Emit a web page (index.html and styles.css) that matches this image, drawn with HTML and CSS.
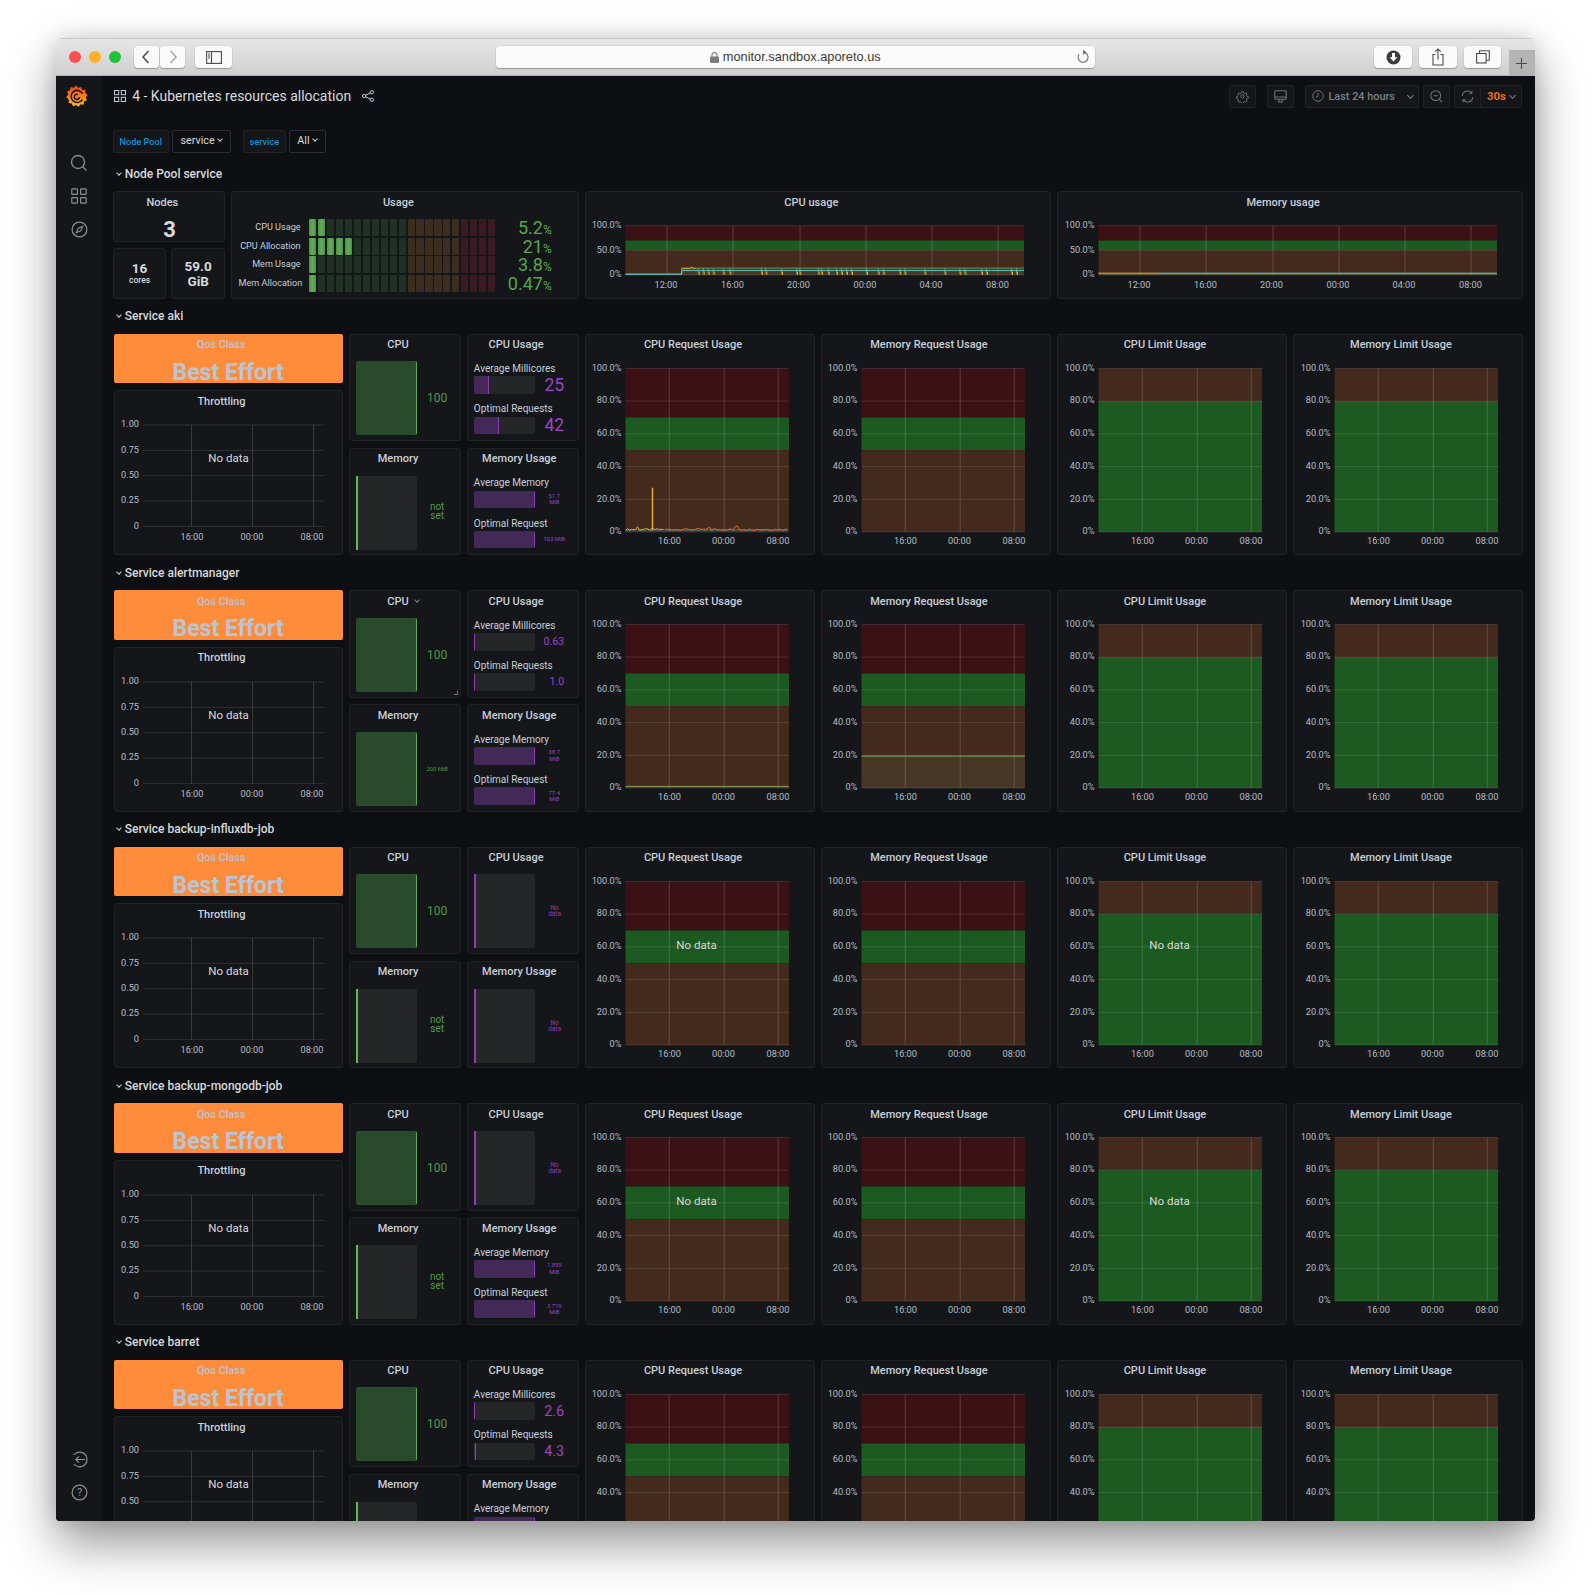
FILE: index.html
```html
<!DOCTYPE html>
<html lang="en">
<head>
    <meta charset="UTF-8">
    <meta name="viewport" content="width=device-width, initial-scale=1.0">
    <title>4 - Kubernetes resources allocation</title>
    <link rel="stylesheet" href="styles.css">
</head>
<body>
    <div class="window">
        <header class="safari">
            <span class="light light-red"></span>
            <span class="light light-yellow"></span>
            <span class="light light-green"></span>
            <div class="nav-pair">
                <button class="tool tool-half"><svg width="12" height="16" viewBox="0 0 12 16"><path d="M8.5 2 3 8l5.5 6" fill="none" stroke="#4a4a4a" stroke-width="1.5"/></svg></button>
                <button class="tool tool-half"><svg width="12" height="16" viewBox="0 0 12 16"><path d="M3.5 2 9 8l-5.5 6" fill="none" stroke="#a8a8a8" stroke-width="1.5"/></svg></button>
            </div>
            <button class="tool tool-sidebar"><svg width="16" height="13" viewBox="0 0 16 13"><rect x=".6" y=".6" width="14.8" height="11.8" fill="none" stroke="#4a4a4a" stroke-width="1.1"/><path d="M5.5 .6v11.8" stroke="#4a4a4a" stroke-width="1.1"/><path d="M2 3h2M2 5h2M2 7h2" stroke="#4a4a4a"/></svg></button>
            <div class="url">
                <svg class="lock" width="9" height="11" viewBox="0 0 9 11"><rect y="4.5" width="9" height="6.5" rx="1" fill="#7b7b7b"/><path d="M2 5V3a2.5 2.5 0 0 1 5 0v2" fill="none" stroke="#7b7b7b" stroke-width="1.1"/></svg>
                <span class="url-text">monitor.sandbox.aporeto.us</span>
                <svg class="reload" width="14" height="15" viewBox="0 0 14 15"><path d="M8.2 3.4A5 5 0 1 1 3 5.4" fill="none" stroke="#6a6a6a" stroke-width="1.1"/><path d="M7.2 0.6 10.4 3.4 7.2 5.8z" fill="#6a6a6a"/></svg>
            </div>
            <button class="tool tool-right tool-first"><svg width="15" height="15" viewBox="0 0 15 15"><circle cx="7.5" cy="7.5" r="7" fill="#3c3c3c"/><path d="M6 3h3v4.2h2.4L7.5 11.6 3.6 7.2H6z" fill="#fff"/></svg></button>
            <button class="tool tool-right"><svg width="14" height="18" viewBox="0 0 14 18"><path d="M4.5 6.5H2v10.5h10V6.500H9.500" fill="none" stroke="#4a4a4a" stroke-width="1.1"/><path d="M7 11.500V1M4.200 3.600 7 .9l2.800 2.700" fill="none" stroke="#4a4a4a" stroke-width="1.1"/></svg></button>
            <button class="tool tool-right"><svg width="14" height="14" viewBox="0 0 14 14"><rect x=".6" y="3.500" width="9.500" height="9.500" fill="none" stroke="#4a4a4a" stroke-width="1.1"/><path d="M3.500 3.500V.7h9.800v9.500h-3.200" fill="none" stroke="#4a4a4a" stroke-width="1.1"/></svg></button>
            <div class="new-tab"><svg width="13" height="13" viewBox="0 0 13 13"><path d="M6.500 1v11M1 6.500h11" stroke="#4a4a4a" stroke-width="1.1"/></svg></div>
        </header>

        <div class="app">
            <aside class="sidemenu">
                <svg class="logo" width="22" height="23" viewBox="0 0 21 22">
                    <defs>
                        <linearGradient id="logo-grad" x1="0" y1="0" x2="0" y2="1">
                            <stop offset="0" stop-color="#ee3f1e"/>
                            <stop offset=".55" stop-color="#f6821f"/>
                            <stop offset="1" stop-color="#fbc30f"/>
                        </linearGradient>
                    </defs>
                    <path d="M9.500 .3l2 2.400 3-.9 1 2.900 3-.1-.1 3.100 2.300 1.800-1.800 2.400 1.200 2.800-2.800 1.200-.4 3-3-.4-1.900 2.400-2.500-1.700-2.800 1.200-1.200-2.800-3-.4.200-3L.3 11.500 2.100 9 1 6.200l2.800-1.100L4.400 2l3 .6z" fill="url(#logo-grad)"/>
                    <path d="M15.800 8.200A5.800 5.800 0 1 0 15.600 14M12.900 11.400a2.500 2.500 0 1 1-1.700-2.400" fill="none" stroke="#1d1512" stroke-width="1.500"/>
                </svg>
                <button class="side-icon side-first"><svg width="18" height="18" viewBox="0 0 18 18"><circle cx="8" cy="8" r="6.500" fill="none" stroke="#8e8e8e" stroke-width="1.300"/><path d="M12.800 12.800l3.700 3.700" stroke="#8e8e8e" stroke-width="1.300"/></svg></button>
                <button class="side-icon"><svg width="16" height="16" viewBox="0 0 16 16"><g fill="none" stroke="#8e8e8e" stroke-width="1.200"><rect x=".8" y=".8" width="5.600" height="5.600" rx=".6"/><rect x="9.600" y=".8" width="5.600" height="5.600" rx=".6"/><rect x=".8" y="9.600" width="5.600" height="5.600" rx=".6"/><rect x="9.600" y="9.600" width="5.600" height="5.600" rx=".6"/></g></svg></button>
                <button class="side-icon"><svg width="17" height="17" viewBox="0 0 17 17"><circle cx="8.500" cy="8.500" r="7.400" fill="none" stroke="#8e8e8e" stroke-width="1.200"/><path d="M11.800 5.200 9.800 9.800 5.200 11.800 7.200 7.200z" fill="none" stroke="#8e8e8e" stroke-width="1.100"/></svg></button>
                <button class="side-icon side-last"><svg width="17" height="17" viewBox="0 0 17 17"><path d="M2.800 4A7.400 7.400 0 1 1 2.800 13" fill="none" stroke="#8e8e8e" stroke-width="1.200"/><path d="M14 8.500H5M8 5.300 4.800 8.500 8 11.700" fill="none" stroke="#8e8e8e" stroke-width="1.200"/></svg></button>
                <button class="side-icon"><svg width="17" height="17" viewBox="0 0 17 17"><circle cx="8.500" cy="8.500" r="7.400" fill="none" stroke="#8e8e8e" stroke-width="1.200"/><text class="help-mark" x="8.500" y="12.200" text-anchor="middle">?</text></svg></button>
            </aside>

            <main class="dash">
                <div class="navbar">
                    <svg class="nav-grid" width="12" height="12" viewBox="0 0 12 12"><g fill="none" stroke="#c7d0d9"><rect x=".5" y=".5" width="4.200" height="4.200"/><rect x="7.300" y=".5" width="4.200" height="4.200"/><rect x=".5" y="7.300" width="4.200" height="4.200"/><rect x="7.300" y="7.300" width="4.200" height="4.200"/></g></svg>
                    <h1 class="dash-title">4 - Kubernetes resources allocation</h1>
                    <svg class="nav-share" width="12" height="12" viewBox="0 0 12 12"><g fill="none" stroke="#c7d0d9"><circle cx="2.200" cy="6" r="1.700"/><circle cx="9.700" cy="2.200" r="1.700"/><circle cx="9.700" cy="9.800" r="1.700"/><path d="M3.700 5.200 8.200 3M3.700 6.800l4.500 2.200"/></g></svg>
                    <div class="nav-tools">
                        <button class="nav-btn"><svg width="13" height="13" viewBox="0 0 24 24"><path d="M12 8.500a3.500 3.500 0 1 0 0 7 3.500 3.500 0 0 0 0-7zM10 2h4l.6 3 2.200 1 2.600-1.700 2.800 2.800-1.700 2.600 1 2.200 3 .6v4l-3 .6-1 2.200 1.700 2.600-2.800 2.800-2.600-1.700-2.200 1-.6 3h-4l-.6-3-2.200-1-2.600 1.700-2.800-2.800 1.700-2.600-1-2.200-3-.6v-4l3-.6 1-2.200-1.700-2.600 2.800-2.800 2.600 1.700 2.200-1z" transform="translate(1.500 1.500) scale(.86)" fill="none" stroke="#6f7378" stroke-width="2"/></svg></button>
                        <button class="nav-btn nav-btn-gap"><svg width="13" height="13" viewBox="0 0 13 13"><g fill="none" stroke="#6f7378" stroke-width="1.100"><rect x=".8" y=".8" width="11.400" height="8.400" rx="1"/><path d="M.8 7h11.400M4 12h5M5 9.500V12M8 9.500V12"/></g></svg></button>
                        <button class="nav-btn nav-time">
                            <svg width="12" height="12" viewBox="0 0 12 12"><circle cx="6" cy="6" r="5.300" fill="none" stroke="#6f7378"/><path d="M6 2.800V6.300L3.800 7.500" fill="none" stroke="#6f7378"/></svg>
                            <span class="time-text">Last 24 hours</span>
                            <span class="caret caret-time"></span>
                        </button>
                        <button class="nav-btn nav-zoom"><svg width="13" height="13" viewBox="0 0 13 13"><circle cx="5.700" cy="5.700" r="4.900" fill="none" stroke="#6f7378" stroke-width="1.100"/><path d="M9.300 9.300l3 3M3.500 5.700h4.400" fill="none" stroke="#6f7378" stroke-width="1.100"/></svg></button>
                        <div class="refresh">
                            <button class="refresh-btn"><svg width="13" height="13" viewBox="0 0 13 13"><g fill="none" stroke="#6f7378" stroke-width="1.100"><path d="M1.200 6A5.300 5.300 0 0 1 10.600 3M11.800 7A5.300 5.300 0 0 1 2.400 10"/><path d="M10.900.8v2.500H8.400M2.100 12.200V9.700h2.500"/></g></svg></button>
                            <button class="refresh-rate"><span>30s</span><span class="caret"></span></button>
                        </div>
                    </div>
                </div>

                <div class="vars">
                    <span class="var-label">Node Pool</span>
                    <span class="var-value">service<span class="caret caret-light"></span></span>
                    <span class="var-label var-second">service</span>
                    <span class="var-value">All<span class="caret caret-light"></span></span>
                </div>

                <section class="row">
                    <h2 class="row-title"><span class="caret caret-light caret-row"></span>Node Pool service</h2>
                    <div class="node-panels">
                        <div class="stat-col">
                            <div class="panel panel-nodes">
                                <div class="panel-title">Nodes</div>
                                <div class="nodes-value">3</div>
                            </div>
                            <div class="stat-pair">
                                <div class="panel stat-small">
                                    <div class="stat-big">16</div>
                                    <div class="stat-unit">cores</div>
                                </div>
                                <div class="panel stat-small">
                                    <div class="stat-big">59.0</div>
                                    <div class="stat-big">GiB</div>
                                </div>
                            </div>
                        </div>
                        <div class="panel">
                            <div class="panel-title">Usage</div>
                            <div class="usage-rows" id="usage-rows"></div>
                        </div>
                        <div class="panel">
                            <div class="panel-title">CPU usage</div>
                            <div id="node-cpu"></div>
                        </div>
                        <div class="panel">
                            <div class="panel-title">Memory usage</div>
                            <div id="node-mem"></div>
                        </div>
                    </div>
                </section>

                <div id="services"></div>
            </main>
        </div>
    </div>
    <script src="app.js"></script>
</body>
</html>
```

FILE: styles.css
```css
* {
    box-sizing: border-box;
}

body {
    margin: 0;
    padding: 38px 56px 0 56px;
    min-height: 1595px;
    background-color: #fff;
    font-family: Roboto, "Liberation Sans", sans-serif;
    color: #c7d0d9;
}

button {
    font-family: inherit;
    padding: 0;
}

.window {
    height: 1483px;
    width: 1479.5px;
    margin-left: -.5px;
    display: flex;
    flex-direction: column;
    overflow: hidden;
    border-radius: 6px 6px 4px 4px;
    box-shadow: 0 22px 50px rgba(0, 0, 0, .42), 0 0 18px rgba(0, 0, 0, .12);
}

/* browser toolbar */
.safari {
    height: 38px;
    flex: none;
    display: flex;
    align-items: flex-start;
    padding: 7.300px 0 0 13.300px;
    background: linear-gradient(#e6e6e6, #cfcfcf);
    border-top: 1px solid #c9c9c9;
    border-bottom: 1px solid #b4b4b4;
}

.light {
    width: 12px;
    height: 12px;
    border-radius: 50%;
    margin: 4.500px 8px 0 0;
}

.light-red { background-color: #fc4d4f; }
.light-yellow { background-color: #fdb024; }
.light-green { background-color: #1ec337; }

.tool {
    height: 22px;
    background-color: #fafafa;
    border: none;
    border-radius: 4px;
    box-shadow: 0 1px 1px rgba(0, 0, 0, .25), 0 0 0 .5px rgba(0, 0, 0, .08);
    display: flex;
    align-items: center;
    justify-content: center;
}

.nav-pair {
    display: flex;
    margin-left: 5px;
    gap: 1px;
}

.tool-half {
    width: 25.300px;
}

.tool-sidebar {
    width: 37px;
    margin-left: 10px;
}

.url {
    width: 599.500px;
    height: 22px;
    margin-left: 263.500px;
    position: relative;
    display: flex;
    align-items: center;
    justify-content: center;
    gap: 4px;
    background-color: #fbfbfb;
    border-radius: 4px;
    box-shadow: 0 1px 1px rgba(0, 0, 0, .25), 0 0 0 .5px rgba(0, 0, 0, .08);
    font-family: "Liberation Sans", sans-serif;
    font-size: 12.800px;
    color: #3a3a3a;
}

.url-text {
    padding-bottom: 1px;
}

.reload {
    position: absolute;
    right: 5px;
    top: 3px;
}

.tool-right {
    width: 37.600px;
    margin-left: 7.300px;
}

.tool-first {
    margin-left: 279.600px;
}

.new-tab {
    width: 26px;
    height: 27.500px;
    margin: 3.700px 0 0 7.500px;
    background-color: #b4b4b4;
    display: flex;
    align-items: center;
    justify-content: center;
}

/* grafana shell */
.app {
    flex: 1;
    display: flex;
    min-height: 0;
    background-color: #0d0f13;
}

.sidemenu {
    width: 45.800px;
    flex: none;
    display: flex;
    flex-direction: column;
    align-items: center;
    padding: 8.800px 0 12.500px;
    background-color: #141619;
}

.logo {
    margin: 0 3px 39px 0;
    flex: none;
}

.side-icon {
    width: 33px;
    height: 33px;
    flex: none;
    padding-left: 1.500px;
    background: none;
    border: none;
    display: flex;
    align-items: center;
    justify-content: center;
}

.side-last {
    margin-top: auto;
}

.help-mark {
    font-size: 11px;
    fill: #8e8e8e;
}

.dash {
    flex: 1;
    min-width: 0;
    overflow: hidden;
    padding: 8.600px 12.800px 0 12.400px;
}

.navbar {
    height: 23.400px;
    display: flex;
    align-items: center;
}

.nav-grid {
    flex: none;
}

.dash-title {
    margin: 0 0 0 6.500px;
    font-size: 14px;
    font-weight: 400;
    color: #d8d9da;
}

.nav-share {
    margin-left: 11px;
}

.nav-tools {
    margin-left: auto;
    display: flex;
    height: 100%;
}

.nav-btn,
.refresh {
    height: 100%;
    width: 26.600px;
    display: flex;
    align-items: center;
    justify-content: center;
    background-color: #141619;
    border: 1px solid #202226;
    border-radius: 2px;
    color: #7b8087;
}

.nav-btn-gap {
    margin-left: 11.400px;
}

.nav-time {
    width: 114.200px;
    margin-left: 11.400px;
    justify-content: flex-start;
    padding-left: 6.500px;
    font-size: 10.900px;
    font-weight: 500;
}

.time-text {
    margin-left: 4px;
}

.caret-time {
    margin-left: 13px;
}

.nav-zoom {
    width: 27.200px;
    margin-left: 3.800px;
}

.refresh {
    width: 68.300px;
    margin-left: 3.800px;
    justify-content: flex-start;
}

.refresh-btn {
    width: 25.600px;
    height: 100%;
    background: none;
    border: none;
    border-right: 1px solid #202226;
    display: flex;
    align-items: center;
    justify-content: center;
}

.refresh-rate {
    flex: 1;
    height: 100%;
    background: none;
    border: none;
    color: #eb6a14;
    font-size: 11.400px;
    font-weight: 700;
    display: flex;
    align-items: center;
    justify-content: center;
    gap: 4px;
}

.caret {
    display: inline-block;
    width: 5px;
    height: 5px;
    border-right: 1px solid #7b8087;
    border-bottom: 1px solid #7b8087;
    transform: translateY(-1px) rotate(45deg);
}

.caret-light {
    width: 4px;
    height: 4px;
    margin-left: 3px;
    border-color: #c7d0d9;
}

.vars {
    height: 23.400px;
    margin: 21.600px 0 0 -.8px;
    display: flex;
    gap: 3.500px;
}

.var-label,
.var-value {
    display: flex;
    align-items: center;
    justify-content: center;
    border-radius: 2px;
}

.var-label {
    width: 55.800px;
    background-color: #141619;
    border: 1px solid #202226;
    color: #0f8fd3;
    font-size: 9.200px;
    font-weight: 500;
}

.var-second {
    width: 42.700px;
    margin-left: 8.500px;
}

.var-value {
    padding: 0 8px 2px 7px;
    min-width: 36.500px;
    background-color: #0d0f13;
    border: 1px solid #2c2e33;
    color: #d8d9da;
    font-size: 10.800px;
}

.var-value:nth-child(2) {
    width: 58.800px;
}

/* rows */
.row-title {
    height: 35px;
    margin: 0;
    display: flex;
    align-items: center;
    font-size: 12px;
    font-weight: 500;
    color: #d8d9da;
}

.vars + .row .row-title {
    margin-top: 3.500px;
}

.caret-row {
    margin: 0 4px 0 3px;
}

.node-panels {
    height: 107.300px;
    margin-left: -.6px;
    display: grid;
    grid-template-columns: 112px 348px 466px 465.600px;
    gap: 6px;
}

.service-panels {
    height: 221.500px;
    display: grid;
    grid-template-columns: 229px 229.800px 229.800px 229.800px 229.800px 229.800px;
    gap: 6.200px;
}

.panel {
    background-color: #141619;
    border: 1px solid #202226;
    border-radius: 3px;
    min-width: 0;
    overflow: hidden;
    position: relative;
}

.panel-title {
    height: 22px;
    padding: 3.500px 13.500px 0 0;
    text-align: center;
    font-size: 11px;
    line-height: 14px;
    font-weight: 500;
    white-space: nowrap;
    color: #c7d0d9;
}

.panel-title-mid {
    padding-right: 7px;
}

.chart {
    display: block;
    overflow: visible;
}

.axis-text {
    font-size: 9.200px;
    fill: #b7bec6;
}

.no-data {
    font-size: 11.500px;
    fill: #d8d9da;
}

/* node pool panels */
.stat-col {
    display: flex;
    flex-direction: column;
    gap: 6.600px;
}

.panel-nodes {
    height: 50.400px;
}

.nodes-value {
    margin-top: 5px;
    text-align: center;
    font-size: 22px;
    line-height: 22px;
    font-weight: 700;
    color: #d8d9da;
    padding-left: 1px;
}

.stat-pair {
    flex: 1;
    display: grid;
    grid-template-columns: 53px 53.800px;
    gap: 5.200px;
}

.stat-small {
    display: flex;
    flex-direction: column;
    align-items: center;
    justify-content: center;
    color: #d8d9da;
}

.stat-big {
    font-size: 13.500px;
    line-height: 14.500px;
    font-weight: 700;
}

.stat-unit {
    font-size: 8.500px;
    line-height: 11px;
    font-weight: 500;
}

.usage-rows {
    padding: 4.700px 26.400px 0 6.500px;
    display: flex;
    flex-direction: column;
    gap: 1.600px;
}

.usage-row {
    height: 17px;
    display: flex;
    align-items: center;
}

.usage-label {
    width: 62px;
    flex: none;
    margin-top: -1px;
    text-align: right;
    font-size: 9.100px;
    white-space: nowrap;
    color: #c7d0d9;
}

.usage-cells {
    display: flex;
    gap: 1.750px;
    margin-left: 8.600px;
    height: 100%;
}

.cell {
    width: 7.200px;
    border-radius: 1px;
}

.cell-green { background-color: #203224; }
.cell-brown { background-color: #3c2e1e; }
.cell-red { background-color: #3a1b24; }

.cell-on {
    background: linear-gradient(90deg, #4a9544, #62ac5b 50%, #4a9544);
}

.usage-value {
    margin-left: auto;
    font-size: 18px;
    color: #56a64b;
}

.usage-value small {
    font-size: 12px;
}

/* qos and gauges */
.stack {
    display: flex;
    flex-direction: column;
    gap: 7px;
}

.qos {
    height: 49.500px;
    flex: none;
    text-align: center;
    background-color: #ff8c3a;
    border-radius: 2px;
    overflow: hidden;
    color: #b8c6d3;
}

.qos-title {
    padding: 4.500px 14px 0 0;
    font-size: 10.800px;
    line-height: 14px;
    font-weight: 500;
}

.qos-value {
    font-size: 23px;
    line-height: 20px;
    font-weight: 700;
    margin-top: 10.300px;
}

.stack .panel {
    flex: 1;
}

.gauges {
    display: grid;
    grid-template-columns: 111.800px 111.800px;
    grid-template-rows: 107.400px 107.400px;
    gap: 6.700px 6.200px;
}

.gauge-body {
    display: flex;
    padding: 4.700px 5.700px 0 6.400px;
}

.gauge-bar {
    width: 61px;
    height: 74px;
    flex: none;
    border-radius: 2px;
    background-color: #252628;
}

.gauge-full {
    background-color: #2a4a2c;
    border-right: 1.500px solid #5aa94f;
}

.gauge-empty {
    border-radius: 0 2px 2px 0;
    border-left: 2px solid #63b757;
}

.gauge-empty-purple {
    border-radius: 0 2px 2px 0;
    border-left: 2px solid #8f3bb8;
}

.gauge-value {
    flex: 1;
    display: flex;
    align-items: center;
    justify-content: center;
    padding: 0 0 0 3px;
    text-align: center;
    color: #4c9c44;
    font-size: 12px;
}

.gauge-value-two {
    font-size: 10px;
    line-height: 9px;
    padding-bottom: 3px;
}

.gauge-value-tiny {
    font-size: 5.800px;
    white-space: nowrap;
}

.gauge-nodata {
    color: #8f3bb8;
    font-size: 6.500px;
    line-height: 6px;
    padding: 0 0 0 2px;
}

.title-caret {
    position: absolute;
    left: 65px;
    top: 8px;
    width: 4px;
    height: 4px;
}

.resize-handle {
    position: absolute;
    right: 2px;
    bottom: 2px;
    width: 4px;
    height: 4px;
    border-right: 1px solid #6f7378;
    border-bottom: 1px solid #6f7378;
}

.bars {
    padding: 5.500px 6px 0;
}

.bar-item + .bar-item {
    margin-top: 8.300px;
}

.bar-label {
    font-size: 10px;
    line-height: 13px;
    white-space: nowrap;
    color: #c7d0d9;
}

.bar-line {
    display: flex;
    align-items: center;
    height: 17.700px;
    margin-top: 1.200px;
}

.bar-track {
    width: 61px;
    height: 100%;
    flex: none;
    border-radius: 2px;
    overflow: hidden;
    background-color: #252628;
}

.bar-fill {
    height: 100%;
    min-width: 1.500px;
    background-color: #432958;
    border-right: 1.500px solid #8f3bb8;
}

.bar-value {
    flex: 1;
    padding-right: 7.500px;
    text-align: right;
    color: #9d45c4;
    white-space: nowrap;
}

.val-lg { font-size: 17.600px; }
.val-md { font-size: 14.400px; }
.val-sm { font-size: 10.600px; }

.val-xs {
    font-size: 5.800px;
    line-height: 6.500px;
    text-align: center;
    padding: 0 0 0 2px;
}

/* chart colours */
.band-red { fill: #3c1115; }
.band-green { fill: #1c5a21; }
.band-brown { fill: #44291d; }

.grid-line {
    stroke: rgba(255, 255, 255, .12);
    stroke-width: 1;
}

.grid-vert {
    stroke: rgba(255, 255, 255, .17);
    stroke-width: 1;
}

.line {
    fill: none;
    stroke-width: 1;
}

.line-spike {
    stroke-width: 1.500;
}

.line-green { stroke: #73bf69; }
.line-cyan { stroke: #5ac4c8; }
.line-yellow { stroke: #e5ac3a; }
.line-orange { stroke: #e8722c; }
.line-lime { stroke: #8b9a52; }

.area-lime { fill: rgba(115, 191, 105, .1); }
```

FILE: app.js
```js
// charts and repeated service rows

const REQUEST_BANDS = [[100, 70, "band-red"], [70, 50, "band-green"], [50, 0, "band-brown"]];
const LIMIT_BANDS = [[100, 80, "band-brown"], [80, 0, "band-green"]];
const PERCENT_TICKS = [[100, "100.0%"], [80, "80.0%"], [60, "60.0%"], [40, "40.0%"], [20, "20.0%"], [0, "0%"]];
const TIME_TICKS = [[43.7, 44, "16:00"], [98.7, 98, "00:00"], [152.7, 152.5, "08:00"]];

function rnd(i) {
    const v = Math.sin(i * 12.9898) * 43758.5453;
    return v - Math.floor(v);
}

// o: w,h of the svg, px,py,pw,ph of the plot, yTicks, xTicks, bands, extra (drawn on top),
// noData, labelGap (axis text below plot), lastY (labels past it are below the window)
function chartSvg(o) {
    const yOf = (v) => o.py + o.ph * (1 - v / 100);
    const lastY = o.lastY || Infinity;
    let out = `<svg class="chart" width="${o.w}" height="${o.h}" viewBox="0 0 ${o.w} ${o.h}">`;
    (o.bands || []).forEach((b) => {
        out += `<rect class="${b[2]}" x="${o.px}" y="${yOf(b[0])}" width="${o.pw}" height="${yOf(b[1]) - yOf(b[0])}"/>`;
    });
    o.yTicks.forEach((t) => {
        const y = yOf(t[0]);
        out += `<line class="grid-line" x1="${o.px}" x2="${o.px + o.pw}" y1="${y}" y2="${y}"/>`;
        if (y < lastY) {
            out += `<text class="axis-text" x="${o.px - 4}" y="${y + 2.300}" text-anchor="end">${t[1]}</text>`;
        }
    });
    o.xTicks.forEach((t) => {
        const x = o.px + t[0];
        const ly = o.py + o.ph + o.labelGap;
        out += `<line class="grid-vert" x1="${x}" x2="${x}" y1="${o.py}" y2="${o.py + o.ph}"/>`;
        if (ly < lastY) {
            out += `<text class="axis-text" x="${o.px + t[1]}" y="${ly}" text-anchor="middle">${t[2]}</text>`;
        }
    });
    if (o.extra) out += o.extra(yOf);
    if (o.noData) {
        out += `<text class="no-data" x="${o.noData[0]}" y="${o.noData[1]}" text-anchor="middle">No data</text>`;
    }
    return out + "</svg>";
}

function bigChart(bands, px, extra, noData, lastY) {
    return chartSvg({
        w: 227.400, h: 197.500, px: px, py: 11.400, pw: 163.500, ph: 163.600, labelGap: 12.500,
        yTicks: PERCENT_TICKS, xTicks: TIME_TICKS, bands: bands, extra: extra,
        noData: noData ? [px + 71, 79.500] : null, lastY: lastY
    });
}

function throttleChart(lastY) {
    const ticks = [[100, "1.00"], [75, "0.75"], [50, "0.50"], [25, "0.25"], [0, "0"]];
    return chartSvg({
        w: 226.600, h: 139, px: 28, py: 12, pw: 181.300, ph: 101.400, labelGap: 13.500,
        yTicks: ticks, xTicks: [[48.600, 49, "16:00"], [109.600, 109, "00:00"], [170.600, 169, "08:00"]],
        noData: [113.500, 49.500], lastY: lastY
    });
}

function spikySeries(yOf) {
    const px = 39.500;
    let yellow = "", orange = "", teal = "";
    for (let i = 0; i <= 81; i++) {
        const x = px + i * 2;
        let v = 1 + rnd(i) * 1.100;
        if (i === 6) v = 3.200;
        if (i === 42) v = 3;
        if (i === 55 || i === 56) v = 3.500;
        if (i <= 19) {
            yellow += `${x},${yOf(v)} `;
        } else {
            orange += `${x},${yOf(v)} `;
        }
        teal += `${x},${yOf(.9 + rnd(i + 90) * .5)} `;
    }
    return `<polyline class="line line-cyan" opacity=".5" points="${teal}"/>` +
        `<polyline class="line line-yellow" points="${yellow}"/>` +
        `<polyline class="line line-orange" points="${orange}"/>` +
        `<path class="line line-spike line-yellow" d="M${px + 27} ${yOf(1)}V${yOf(27)}"/>`;
}

function flatLow(yOf) {
    return `<rect class="area-lime" x="39.500" y="${yOf(1)}" width="163.500" height="${yOf(0) - yOf(1)}"/>` +
        `<line class="line line-lime" x1="39.500" x2="203" y1="${yOf(1)}" y2="${yOf(1)}"/>`;
}

function flatTwenty(yOf) {
    return `<rect class="area-lime" x="39.500" y="${yOf(19.500)}" width="163.500" height="${yOf(0) - yOf(19.500)}"/>` +
        `<line class="line line-green" x1="39.500" x2="203" y1="${yOf(19.500)}" y2="${yOf(19.500)}" opacity=".9"/>`;
}

// top row wide charts
const WIDE_Y = [[100, "100.0%"], [50, "50.0%"], [0, "0%"]];
const WIDE_X = [[41.600, 40.500, "12:00"], [107.600, 107, "16:00"], [174.600, 173, "20:00"],
    [240.600, 239.500, "00:00"], [306.600, 305.500, "04:00"], [372.600, 372, "08:00"]];
const CPU_DIPS = [355, 370, 385, 400, 430, 450, 545, 558, 605, 650, 660, 715, 725, 745, 770, 785, 800, 815,
    860, 895, 910, 960, 975, 1035, 1095, 1140, 1155, 1205, 1220, 1295, 1310];

function wideChart(px, extra) {
    return chartSvg({
        w: 463.400, h: 84, px: px, py: 11.700, pw: 398.500, ph: 49.300, labelGap: 13.500,
        yTicks: WIDE_Y, xTicks: WIDE_X, bands: REQUEST_BANDS, extra: extra
    });
}

function nodeCpuLines(yOf) {
    const px = 39.500, pw = 398.500, step = px + pw * .141;
    let dips = "", stubs = "";
    CPU_DIPS.forEach((d) => {
        const x = (px + ((d - 137) / 3)).toFixed(1);
        dips += `M${x} ${yOf(14)}V${yOf(2)}`;
        stubs += `M${(+x + 1).toFixed(1)} ${yOf(0)}V${yOf(7)}`;
    });
    return `<rect class="area-lime" x="${step}" y="${yOf(14)}" width="${pw * .859}" height="${yOf(0) - yOf(14)}"/>` +
        `<path class="line line-green" opacity=".75" d="M${px} ${yOf(2)}H${step}V${yOf(14)}H${px + pw}${dips}"/>` +
        `<path class="line line-yellow" d="${stubs}M${step} ${yOf(13)}H${step + 8}l2 -1.500 2 1.500H${step + 14}"/>` +
        `<path class="line line-cyan" d="M${px} ${yOf(1.500)}H${step}V${yOf(9)}H${px + pw}"/>`;
}

function nodeMemLines(yOf) {
    const px = 40.500, pw = 398.500;
    return `<line class="line line-yellow" opacity=".7" x1="${px}" x2="${px + 60}" y1="${yOf(4)}" y2="${yOf(4)}"/>` +
        `<line class="line line-green" x1="${px}" x2="${px + pw}" y1="${yOf(2.500)}" y2="${yOf(2.500)}"/>` +
        `<line class="line line-cyan" opacity=".7" x1="${px + 60}" x2="${px + pw}" y1="${yOf(4)}" y2="${yOf(4)}"/>`;
}

document.getElementById("node-cpu").innerHTML = wideChart(39.500, nodeCpuLines);
document.getElementById("node-mem").innerHTML = wideChart(40.500, nodeMemLines);

// usage heat rows
const usageRows = [
    ["CPU Usage", 2, "5.2"],
    ["CPU Allocation", 5, "21"],
    ["Mem Usage", 1, "3.8"],
    ["Mem Allocation", 1, "0.47"]
];
document.getElementById("usage-rows").innerHTML = usageRows.map((r) => {
    let cells = "";
    for (let i = 0; i < 21; i++) {
        const tone = i < 11 ? "cell-green" : i < 17 ? "cell-brown" : "cell-red";
        cells += `<span class="cell ${tone}${i < r[1] ? " cell-on" : ""}"></span>`;
    }
    return `<div class="usage-row"><span class="usage-label">${r[0]}</span>` +
        `<span class="usage-cells">${cells}</span>` +
        `<span class="usage-value">${r[2]}<small>%</small></span></div>`;
}).join("");

// service rows
function gauge(title, kind, text, extra) {
    let bar = "gauge-full", val = `<span class="gauge-value">${text}</span>`;
    if (kind === "notset") {
        bar = "gauge-empty";
        val = `<span class="gauge-value gauge-value-two">not<br>set</span>`;
    }
    if (kind === "tiny") {
        val = `<span class="gauge-value gauge-value-tiny">${text}</span>`;
    }
    if (kind === "cut") {
        bar = "gauge-empty";
        val = "";
    }
    return `<div class="panel"><div class="panel-title">${title}</div>` +
        `<div class="gauge-body"><div class="gauge-bar ${bar}"></div>${val}</div>${extra || ""}</div>`;
}

function barItem(label, pct, value, size) {
    return `<div class="bar-item"><div class="bar-label">${label}</div><div class="bar-line">` +
        `<div class="bar-track"><div class="bar-fill" style="width:${pct}%"></div></div>` +
        `<div class="bar-value ${size}">${value}</div></div></div>`;
}

function usagePanel(title, items, titleClass) {
    const cls = titleClass ? "panel-title " + titleClass : "panel-title";
    if (!items) {
        return `<div class="panel"><div class="${cls}">${title}</div><div class="gauge-body">` +
            `<div class="gauge-bar gauge-empty-purple"></div>` +
            `<span class="gauge-value gauge-nodata">No<br>data</span></div></div>`;
    }
    return `<div class="panel"><div class="${cls}">${title}</div><div class="bars">` +
        items.map((i) => barItem(i[0], i[1], i[2], i[3])).join("") + "</div></div>";
}

function chartPanel(title, svg) {
    return `<div class="panel"><div class="panel-title">${title}</div>${svg}</div>`;
}

const cpuBars = (a, pa, b, pb, size) => [["Average Millicores", pa, a, size], ["Optimal Requests", pb, b, size]];
const memBars = (a, b) => [["Average Memory", 100, a, "val-xs"], ["Optimal Request", 100, b, "val-xs"]];

const services = [
    {
        name: "aki", memKind: "notset",
        cpu: cpuBars("25", 24.600, "42", 40.500, "val-lg"),
        mem: memBars("51.7<br>MiB", "103 MiB"),
        cpuExtra: spikySeries
    },
    {
        name: "alertmanager", memKind: "tiny", memText: "200 MiB", resize: true,
        cpu: cpuBars("0.63", 0, "1.0", 0, "val-sm"),
        mem: memBars("38.7<br>MiB", "77.4<br>MiB"),
        cpuExtra: flatLow, memExtra: flatTwenty
    },
    { name: "backup-influxdb-job", memKind: "notset", cpu: null, mem: null, noData: true },
    {
        name: "backup-mongodb-job", memKind: "notset", cpu: null,
        mem: memBars("1.859<br>MiB", "3.719<br>MiB"), noData: true
    },
    {
        // last row runs past the bottom of the window
        name: "barret", memKind: "cut",
        cpu: cpuBars("2.6", 2.500, "4.3", 4, "val-md"),
        mem: [["Average Memory", 100, "", "val-xs"]],
        chartLastY: 130, throttleLastY: 75
    }
];

document.getElementById("services").innerHTML = services.map((s) => {
    const handle = s.resize ?
        '<span class="caret title-caret"></span><span class="resize-handle"></span>' : "";
    return `<section class="row">
        <h2 class="row-title"><span class="caret caret-light caret-row"></span>Service ${s.name}</h2>
        <div class="service-panels">
            <div class="stack">
                <div class="qos"><div class="qos-title">Qos Class</div><div class="qos-value">Best Effort</div></div>
                ${chartPanel("Throttling", throttleChart(s.throttleLastY))}
            </div>
            <div class="gauges">
                ${gauge("CPU", "full", "100", handle)}
                ${usagePanel("CPU Usage", s.cpu)}
                ${gauge("Memory", s.memKind, s.memText)}
                ${usagePanel("Memory Usage", s.mem, "panel-title-mid")}
            </div>
            ${chartPanel("CPU Request Usage", bigChart(REQUEST_BANDS, 39.500, s.cpuExtra, s.noData, s.chartLastY))}
            ${chartPanel("Memory Request Usage", bigChart(REQUEST_BANDS, 39.500, s.memExtra, false, s.chartLastY))}
            ${chartPanel("CPU Limit Usage", bigChart(LIMIT_BANDS, 40.500, null, s.noData, s.chartLastY))}
            ${chartPanel("Memory Limit Usage", bigChart(LIMIT_BANDS, 40.500, null, false, s.chartLastY))}
        </div>
    </section>`;
}).join("");
```
